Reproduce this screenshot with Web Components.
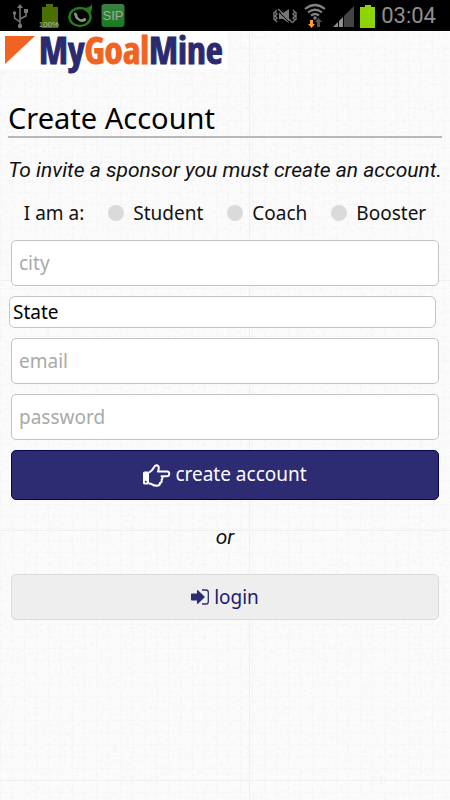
<!DOCTYPE html>
<html lang="en">
<head>
<meta charset="utf-8">
<meta name="viewport" content="width=device-width, initial-scale=1">
<title>MyGoalMine</title>
<style>
html { min-height: 100%; }
body {
  margin: 0;
  min-height: 100vh;
  font: 19px/28px "Noto Sans", "Open Sans", sans-serif;
  color: #111;
  background-color: #fbfbfb;
  background-image:
    linear-gradient(90deg, #f0f0f0 1px, transparent 1px),
    linear-gradient(#f0f0f0 1px, transparent 1px),
    url("data:image/svg+xml,%3Csvg xmlns='http://www.w3.org/2000/svg' width='250' height='250'%3E%3Cfilter id='n' x='0' y='0' width='1' height='1'%3E%3CfeTurbulence type='fractalNoise' baseFrequency='.3' numOctaves='3' stitchTiles='stitch'/%3E%3CfeColorMatrix values='0 0 0 0 0 0 0 0 0 0 0 0 0 0 0 .06 0 0 0 -.03'/%3E%3C/filter%3E%3Crect width='250' height='250' filter='url(%23n)'/%3E%3C/svg%3E"),
    repeating-linear-gradient(90deg, rgba(0,0,0,.012) 0 1px, transparent 1px 12px),
    repeating-linear-gradient(rgba(0,0,0,.012) 0 1px, transparent 1px 12px);
  background-size: 250px 250px, 250px 250px, 250px 250px, auto, auto;
  background-position: 249px 0, 0 280px, 0 0, 0 0, 0 0;
}
</style>
</head>
<body>
<goal-app></goal-app>
<script>
function define(name, html) {
  const template = document.createElement('template');
  template.innerHTML = html;
  customElements.define(name, class extends HTMLElement {
    constructor() {
      super();
      this.attachShadow({ mode: 'open' }).append(template.content.cloneNode(true));
    }
    connectedCallback() {
      const input = this.shadowRoot.querySelector('input[data-field]');
      if (input) {
        input.type = this.getAttribute('type') || 'text';
        input.placeholder = this.getAttribute('label');
        input.setAttribute('aria-label', this.getAttribute('label'));
      }
    }
  });
}

define('status-bar', `
<style>
  :host { display: flex; justify-content: space-between; align-items: center; height: 31px; padding: 0 14px 0 12px;
    background: #000; color: #8f8f8f; font: 22px/28px Roboto, sans-serif; }
  div { display: flex; align-items: center; }
  .left { gap: 7px; }
  .right { gap: 6px; }
  svg { display: block; }
  text { font-family: "Liberation Sans", sans-serif; }
</style>
<div class="left">
  <svg width="18" height="26" viewBox="0 0 18 26" fill="none" stroke="#777" stroke-width="1.5" aria-label="USB">
    <path d="M8 3V23M8 19L2.500 15V11M8 16L14 13V9"/><path d="M5 5L8 1L11 5Z" fill="#777" stroke="none"/>
    <circle cx="8" cy="23" r="2.200" fill="#777" stroke="none"/><circle cx="2.500" cy="10" r="1.800" fill="#777" stroke="none"/><path d="M12 6H16V10H12Z" fill="#777" stroke="none"/>
  </svg>
  <svg width="24" height="26" viewBox="0 0 24 26">
    <path d="M9 1H16V4H21V25H5V4H9Z" fill="#4a6f00"/>
    <text x="12" y="24" text-anchor="middle" font-size="8" fill="#bbb">100%</text>
  </svg>
  <svg width="26" height="26" viewBox="0 0 26 26" aria-label="Call">
    <ellipse cx="12" cy="14" rx="10.500" ry="9" fill="none" stroke="#257b1b" stroke-width="2.500"/>
    <path d="M15 5Q22 5 24 1Q25 8 21 11Z" fill="#257b1b"/>
    <path d="M6 10Q8 8.500 9 11Q9 14 12 16Q14 17 16 15Q19 15 18 17.500Q15 20 11 18Q6 15 6 10Z" fill="#859a80"/>
  </svg>
  <svg width="24" height="26" viewBox="0 0 24 26">
    <defs><linearGradient id="g" x2="0" y2="1"><stop stop-color="#3b8142"/><stop offset="1" stop-color="#197a22"/></linearGradient></defs>
    <rect x=".5" y="1" width="23" height="23" rx="3" fill="url(#g)"/>
    <text x="12" y="17" text-anchor="middle" font-size="13" fill="#9caf9c">SIP</text>
  </svg>
</div>
<div class="right">
  <svg width="24" height="22" viewBox="0 0 24 22" fill="none" stroke="#777" stroke-width="1.400" aria-label="Vibrate">
    <path d="M4 5L2 7L4 9L2 11L4 13L2 15L4 17M1 7V15M20 5L22 7L20 9L22 11L20 13L22 15L20 17M23 7V15"/>
    <path d="M6 8H10L16 4V18L10 14H6Z" fill="#777" stroke="none"/><path d="M4 5L18 19" stroke="#000" stroke-width="1"/><path d="M5 4L20 18"/>
  </svg>
  <svg width="24" height="26" viewBox="0 0 24 26" aria-label="Wi-Fi">
    <g fill="none" stroke="#808080" stroke-width="2.200"><path d="M2 6Q12 -2 22 6M5 9.500Q12 4 19 9.500M8 12.500Q12 9.500 16 12.500"/></g>
    <circle cx="12" cy="15" r="1.800" fill="#808080"/>
    <path d="M7 17H10V21H12L8.500 25L5 21H7Z" fill="#ff9c2a"/><path d="M14 24V19H12L15.500 15L19 19H17V24Z" fill="#555"/>
  </svg>
  <svg width="21" height="22" viewBox="0 0 21 22" aria-label="Signal">
    <path d="M11 11L21 1V22H11Z" fill="#444"/><path d="M0 22L5 17V22ZM6 22V16L10 12V22Z" fill="#909090"/>
  </svg>
  <svg width="15" height="24" viewBox="0 0 15 24" aria-label="Battery"><path d="M5 1H11V3H15V24H0V3H5Z" fill="#8fd400"/></svg>
  <time>03:04</time>
</div>`);

define('brand-logo', `
<style>
  :host { display: block; }
  a { display: inline-flex; align-items: center; gap: 4px; height: 38px; padding: 0 5px; background: #fff; text-decoration: none;
    color: #2b2a70; font: bold 37px/38px Impact, "Liberation Sans Narrow", "Open Sans Condensed", "Noto Sans ExtraCondensed", "Noto Sans Condensed", "Roboto Condensed", "Liberation Sans", sans-serif; -webkit-text-stroke: 1px currentColor; }
  b { color: #f26322; }
</style>
<a href="#home"><svg width="30" height="28" viewBox="0 0 30 28" aria-hidden="true"><path d="M0 0H30L0 28Z" fill="#f26322"/></svg><span>My<b>Goal</b>Mine</span></a>`);

define('role-picker', `
<style>
  :host { display: block; }
  div { display: flex; justify-content: center; align-items: center; gap: 24px; }
  label { display: flex; align-items: center; gap: 9px; }
  input { appearance: none; width: 16px; height: 16px; margin: 0; border-radius: 50%; background: #dadada; }
  input:checked { background: #2b2a70; }
</style>
<div role="radiogroup" aria-labelledby="lead">
  <span id="lead">I am a:</span>
  <label><input type="radio" name="role">Student</label>
  <label><input type="radio" name="role">Coach</label>
  <label><input type="radio" name="role">Booster</label>
</div>`);

define('text-field', `
<style>
  :host { display: block; }
  input { display: block; box-sizing: border-box; width: 100%; height: 46px; padding: 0 7px; margin: 0; font: inherit; color: #111;
    background: #fff; border: 1px solid #c4c4c4; border-radius: 5px; }
  input::placeholder { color: #a9a9a9; opacity: 1; }
</style>
<input data-field>`);

define('state-select', `
<style>
  :host { display: block; }
  select { appearance: none; display: block; box-sizing: border-box; width: 100%; height: 32px; margin: 0; padding: 0 3px; font: inherit;
    line-height: 28px; color: #000; background: #fff; border: 1px solid #c4c4c4; border-radius: 6px; }
</style>
<select aria-label="State"><option>State</option></select>`);

define('action-button', `
<style>
  :host { display: block; --back: #eee; --edge: #dadada; --ink: #1c1b6b; --height: 46px; }
  :host([primary]) { --back: #2d2c72; --edge: #06054e; --ink: #fff; --height: 50px; }
  button { display: flex; justify-content: center; align-items: center; gap: 5px; box-sizing: border-box; width: 100%; height: var(--height);
    margin: 0; padding: 0 0 3px; font: inherit; color: var(--ink); background: var(--back); border: 1px solid var(--edge); border-radius: 5px; }
  :host(:not([primary])) button { padding: 0; }
</style>
<button type="button"><slot name="icon"></slot><slot></slot></button>`);

define('goal-app', `
<style>
  :host { display: block; }
  main { padding: 30px 8px 0; }
  h1 { margin: 0; height: 35px; font-size: 29px; line-height: 33px; font-weight: 400; border-bottom: 2px solid #b8b8b8; color: #000; }
  p { margin: 0; font: italic 21px/28px Roboto, sans-serif; text-align: center; color: #111; }
  .intro { padding: 18px 0 15px; white-space: nowrap; }
  form { display: grid; gap: 10px; padding: 0 3px; }
  role-picker { padding-bottom: 3px; }
  state-select { margin: 0 3px 0 -2px; }
  .or { padding: 13px 0; }
  svg { display: block; overflow: visible; }
</style>
<status-bar></status-bar>
<brand-logo></brand-logo>
<main>
  <h1>Create Account</h1>
  <p class="intro">To invite a sponsor you must create an account.</p>
  <form>
    <role-picker></role-picker>
    <text-field label="city"></text-field>
    <state-select></state-select>
    <text-field label="email" type="email"></text-field>
    <text-field label="password" type="password"></text-field>
    <action-button primary>
      <svg slot="icon" width="27" height="24" viewBox="0 0 27 24" aria-hidden="true">
        <g transform="translate(0 2)">
        <path d="M6 8.500Q9 7 10.500 4Q12 1 14 1.200Q17 2 15 7.500H24.500Q26.500 8 26.200 10Q26 12.300 24 12.300H18.500Q20.500 14 18.500 16Q19.500 18 17 19Q17 21.800 14 21.800Q11 21.800 8 19.800L6 19.500" fill="none" stroke="#fff" stroke-width="2" stroke-linejoin="round"/>
        <rect y="7.500" width="6" height="13" rx="1.500" fill="#fff"/><circle cx="2.800" cy="17.800" r="1" fill="#2d2c72"/></g>
      </svg>create account
    </action-button>
    <p class="or">or</p>
    <action-button>
      <svg slot="icon" width="18" height="16" viewBox="0 0 18 16" aria-hidden="true">
        <path d="M0 5.200Q0 4.500 .7 4.500H6V1.500Q6.300 .7 7 1.200L13.500 7.500Q14 8 13.500 8.500L7 14.800Q6.300 15.300 6 14.500V11.500H.7Q0 11.500 0 10.800Z" fill="#2d2c72"/>
        <path d="M11 1H15Q17.300 1 17.300 3.300V12.700Q17.300 15 15 15H11" fill="none" stroke="#2d2c72" stroke-width="1.300"/>
      </svg>login
    </action-button>
  </form>
</main>`);
</script>
</body>
</html>
